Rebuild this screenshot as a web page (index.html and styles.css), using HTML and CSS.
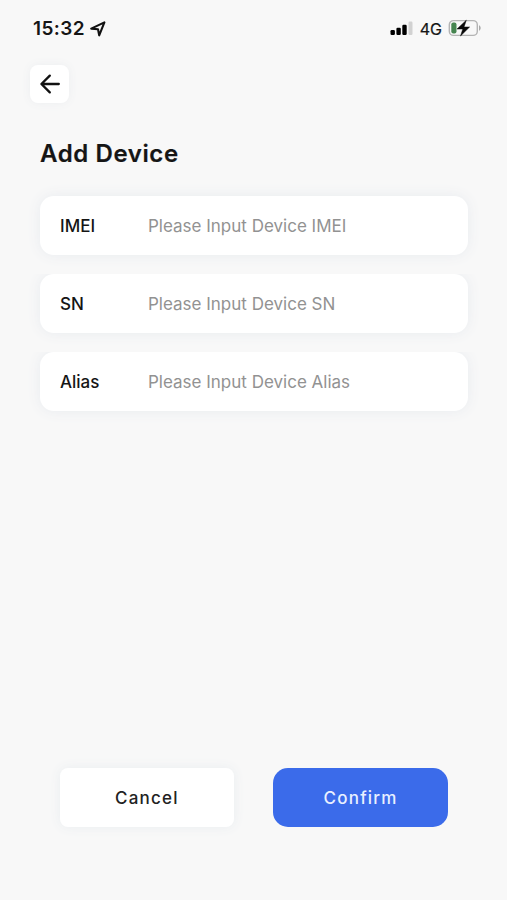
FILE: index.html
```html
<!DOCTYPE html>
<html lang="en">
<head>
<meta charset="utf-8">
<title>Add Device</title>
<link rel="stylesheet" href="styles.css">
</head>
<body>
<div class="status">
  <span class="time">15:32</span>
  <svg class="location" width="18" height="18" viewBox="0 0 18 18"><path d="M2.2 8.6 15.4 2.4 10.2 15.4 9 9.2Z" fill="none" stroke="#111" stroke-width="2.1" stroke-linejoin="round"/></svg>
  <svg class="signal" width="23" height="15" viewBox="0 0 23 15"><rect x="0.5" y="9" width="4.4" height="5" rx="1.2"/><rect x="6.4" y="6.7" width="4.4" height="7.3" rx="1.2"/><rect x="12.3" y="3.8" width="4.4" height="10.2" rx="1.2"/><rect x="18.5" y="0.6" width="4" height="13.4" rx="1.2" fill="#d2d2d2"/></svg>
  <span class="network">4G</span>
  <svg class="battery" width="34" height="20" viewBox="0 0 34 20"><rect x="1.3" y="2.6" width="28" height="14.8" rx="4.2" fill="none" stroke="#b4b4b4" stroke-width="1.4"/><rect x="3.3" y="4.6" width="5.2" height="10.8" rx="2" fill="#468550"/><path d="M31 7q3.5 3 0 6z" fill="#aaa"/><path d="M18.3 2.2 9 11h5.8l-2.3 7L21.6 9H16z" fill="#080808" stroke="#080808" stroke-width=".5" stroke-linejoin="round"/></svg>
</div>
<button class="back" aria-label="Back"><svg width="24" height="24" viewBox="0 0 24 24"><path d="M20.8 12H4M11.8 3.6 3.4 12l8.4 8.4" fill="none" stroke="#111" stroke-width="2.3" stroke-linecap="round" stroke-linejoin="round"/></svg></button>
<h1>Add Device</h1>
<form>
  <label class="field"><span class="name">IMEI</span><span class="hint">Please Input Device IMEI</span></label>
  <label class="field"><span class="name">SN</span><span class="hint">Please Input Device SN</span></label>
  <label class="field"><span class="name">Alias</span><span class="hint">Please Input Device Alias</span></label>
</form>
<div class="actions"><button class="btn">Cancel</button><button class="btn primary">Confirm</button></div>
</body>
</html>
```
FILE: styles.css
```css
* { box-sizing: border-box; }
body { margin: 0; height: 900px; overflow: hidden; background: #f8f8f8; color: #151515; font-family: Inter, sans-serif; display: flex; flex-direction: column; }
button { border: 0; padding: 0; font-family: inherit; }
.status { height: 65px; padding: 18px 25px 0 33px; display: flex; align-items: flex-start; }
.time { font-size: 19px; line-height: 22px; font-weight: 600; letter-spacing: .4px; }
.location { margin: 2px 0 0 4px; }
.signal { margin: 3px 7px 0 auto; }
.network { font-size: 16px; line-height: 22px; -webkit-text-stroke: .2px; }
.battery { margin: 0 0 0 6px; }
.back { width: 39px; height: 38px; margin-left: 30px; border-radius: 8px; background: #fff; box-shadow: 0 0 10px #eceef0; display: flex; align-items: center; justify-content: center; }
h1 { margin: 36px 0 0 40px; font-size: 24px; line-height: 30px; font-weight: 600; letter-spacing: .6px; -webkit-text-stroke: .2px; }
form { margin: 27px 39px 0 40px; display: flex; flex-direction: column; gap: 19px; }
.field { height: 59px; padding: 1px 20px 0; border-radius: 14px; background: #fff; box-shadow: 0 0 14px #e8ebef; display: flex; align-items: center; }
.field + .field { clip-path: inset(0 -20px -20px -20px); }
.name { width: 88px; font-size: 17px; line-height: 21px; font-weight: 500; }
.hint { padding-top: 1px; font-size: 17px; line-height: 21px; color: #929292; }
.actions { margin: auto 59px 73px 59.5px; display: flex; gap: 39px; }
.btn { flex: 1; height: 59px; border-radius: 8px; background: #fff; color: #222; font-size: 17px; font-weight: 500; letter-spacing: 1.2px; box-shadow: 0 0 12px #e9edf0; }
.primary { background: #3b6bea; color: #e9f0ff; border-radius: 15px; box-shadow: none; }
```
